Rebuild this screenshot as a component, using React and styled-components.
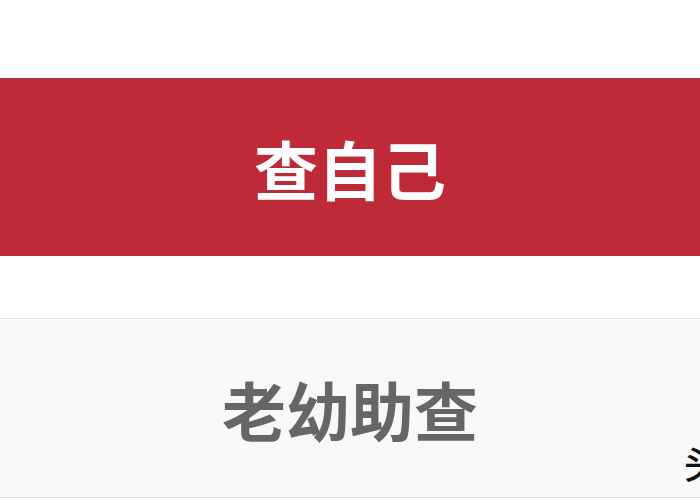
import React from "react";
import styled, { createGlobalStyle } from "styled-components";

const GlobalStyle = createGlobalStyle`
  html, body {
    margin: 0;
    padding: 0;
    background: #ffffff;
  }
  body {
    font-family: "Noto Sans CJK SC", "Noto Sans", sans-serif;
  }
`;

const Page = styled.div`
  position: relative;
  width: 700px;
  height: 500px;
  overflow: hidden;
  display: flex;
  flex-direction: column;
  gap: 62px;
  padding-top: 78px;
  box-sizing: border-box;
  background: #ffffff;
`;

const ActionButton = styled.button`
  display: flex;
  align-items: center;
  justify-content: center;
  width: 100%;
  height: ${(p) => p.$height}px;
  margin: 0;
  padding: 0;
  border: none;
  border-top: 1px solid ${(p) => (p.$primary ? "#b0303a" : "#e4e4e4")};
  border-bottom: 1px solid ${(p) => (p.$primary ? "#b0303a" : "#e4e4e4")};
  background: ${(p) => (p.$primary ? "#be2a37" : "#f8f8f8")};
  color: ${(p) => (p.$primary ? "#ffffff" : "#666666")};
  font-family: "Noto Sans CJK SC", "Noto Sans", sans-serif;
  font-size: 64px;
  font-weight: 700;
  letter-spacing: 0;
  cursor: pointer;
  box-sizing: border-box;
`;

// partial watermark glyph cut by the right edge
const Watermark = styled.span`
  position: absolute;
  left: 684px;
  top: 443px;
  font-family: "Noto Sans CJK SC", sans-serif;
  font-size: 38px;
  font-weight: 500;
  color: #111111;
  line-height: 1;
`;

export default function App() {
  return (
    <>
      <GlobalStyle />
      <Page>
        <ActionButton $primary $height={178}>
          查自己
        </ActionButton>
        <ActionButton $height={180}>老幼助查</ActionButton>
        <Watermark>头</Watermark>
      </Page>
    </>
  );
}
